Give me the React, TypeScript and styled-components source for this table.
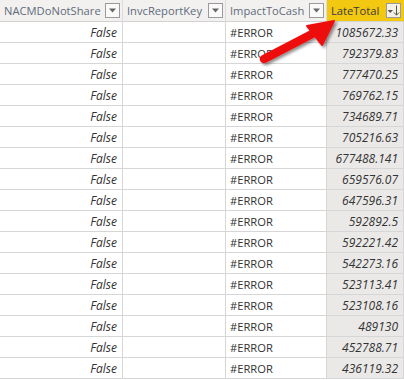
import React from "react";
import styled, { createGlobalStyle } from "styled-components";

const Global = createGlobalStyle`
  html, body { margin: 0; padding: 0; background: #fff; }
  body { font-family: "Segoe UI", "Open Sans", "Noto Sans", sans-serif; }
`;

const Wrap = styled.div`
  position: relative;
  width: 404px;
  height: 380px;
  overflow: hidden;
`;

const Grid = styled.div`
  display: grid;
  grid-template-columns: 123px 103px 101px 77px;
  grid-auto-rows: 21px;
  grid-template-rows: 22px;
`;

const HeadCell = styled.div<{ $active?: boolean }>`
  display: flex;
  align-items: center;
  justify-content: space-between;
  padding: 0 2px 0 4px;
  box-sizing: border-box;
  background: ${(p) => (p.$active ? "#f2c811" : "#f2f1f0")};
  border-right: 1px solid ${(p) => (p.$active ? "#f2c811" : "#dcdcdc")};
  border-bottom: 1px solid #d2d2d2;
  color: ${(p) => (p.$active ? "#3a3a3a" : "#5f6b7a")};
  font-size: 11.2px;
  white-space: nowrap;
`;

const FilterBtn = styled.div<{ $active?: boolean }>`
  width: 15px;
  height: 15px;
  box-sizing: border-box;
  border: 1px solid #9a9a9a;
  background: ${(p) => (p.$active ? "#f4f1e6" : "#fafafa")};
  display: flex;
  align-items: center;
  justify-content: center;
  flex-shrink: 0;
`;

const Cell = styled.div<{ $align?: "left" | "right"; $italic?: boolean; $shade?: boolean }>`
  display: flex;
  align-items: center;
  justify-content: ${(p) => (p.$align === "left" ? "flex-start" : "flex-end")};
  padding: 0 5px 0 4px;
  box-sizing: border-box;
  border-right: 1px solid #d6d6d6;
  border-bottom: 1px solid #d6d6d6;
  background: ${(p) => (p.$shade ? "#eae9e8" : "#ffffff")};
  font-size: ${(p) => (p.$italic ? "12px" : "11.2px")};
  font-style: ${(p) => (p.$italic ? "italic" : "normal")};
  color: #333;
  white-space: nowrap;
`;

const ArrowLayer = styled.svg`
  position: absolute;
  left: 0;
  top: 0;
  pointer-events: none;
`;

const values = [
  "1085672.33",
  "792379.83",
  "777470.25",
  "769762.15",
  "734689.71",
  "705216.63",
  "677488.141",
  "659576.07",
  "647596.31",
  "592892.5",
  "592221.42",
  "542273.16",
  "523113.41",
  "523108.16",
  "489130",
  "452788.71",
  "436119.32",
];

const DropIcon = () => (
  <svg width="9" height="5" viewBox="0 0 9 5">
    <path d="M1 0.5 H8 L4.5 4.5 Z" fill="#666" />
  </svg>
);

const SortIcon = () => (
  <svg width="13" height="11" viewBox="0 0 13 11">
    <path d="M0.5 5 H6 L3.25 8 Z" fill="#555" />
    <path d="M9.5 0.5 V10" stroke="#555" strokeWidth="1" />
    <path d="M7 7.5 L9.5 10.2 L12 7.5" stroke="#555" strokeWidth="1" fill="none" />
  </svg>
);

export default function App() {
  return (
    <Wrap>
      <Global />
      <Grid>
        <HeadCell>
          NACMDoNotShare
          <FilterBtn>
            <DropIcon />
          </FilterBtn>
        </HeadCell>
        <HeadCell>
          InvcReportKey
          <FilterBtn>
            <DropIcon />
          </FilterBtn>
        </HeadCell>
        <HeadCell>
          ImpactToCash
          <FilterBtn>
            <DropIcon />
          </FilterBtn>
        </HeadCell>
        <HeadCell $active>
          LateTotal
          <FilterBtn $active>
            <SortIcon />
          </FilterBtn>
        </HeadCell>
        {values.map((v) => (
          <React.Fragment key={v}>
            <Cell $italic>False</Cell>
            <Cell />
            <Cell $align="left">#ERROR</Cell>
            <Cell $italic $shade>
              {v}
            </Cell>
          </React.Fragment>
        ))}
      </Grid>
      <ArrowLayer width="404" height="380" viewBox="0 0 404 380">
        <defs>
          <filter id="sh" x="-20%" y="-20%" width="140%" height="140%">
            <feDropShadow dx="2" dy="2" stdDeviation="1.5" floodColor="#000" floodOpacity="0.45" />
          </filter>
        </defs>
        <g filter="url(#sh)">
          <path
            d="M264 59 L314 33"
            stroke="#ee1111"
            strokeWidth="8.5"
            strokeLinecap="round"
          />
          <path d="M334 21 L307 26 L322 45 Z" fill="#ee1111" stroke="#ee1111" strokeWidth="2" strokeLinejoin="round" />
        </g>
      </ArrowLayer>
    </Wrap>
  );
}
